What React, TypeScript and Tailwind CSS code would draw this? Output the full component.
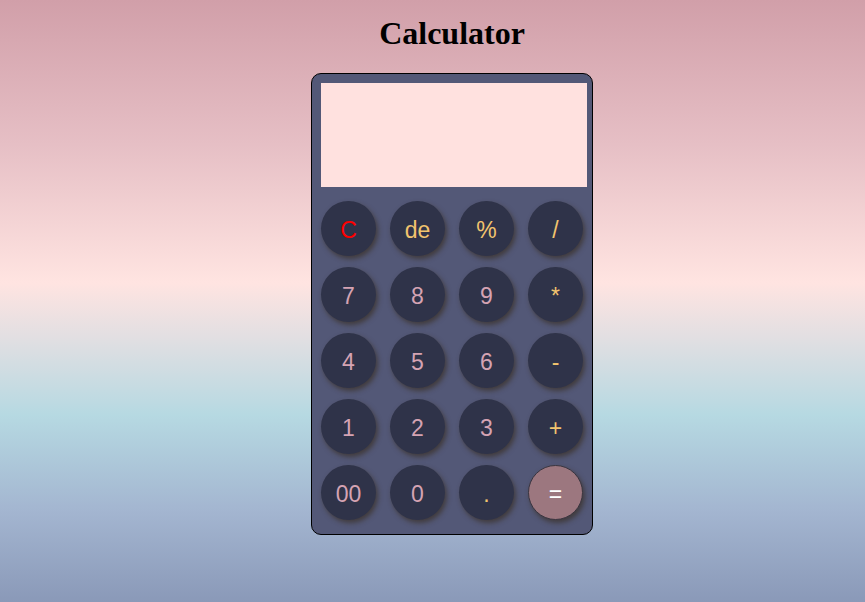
import React from "react";

const rows: { label: string; kind: "clear" | "op" | "num" | "eq" }[][] = [
  [
    { label: "C", kind: "clear" },
    { label: "de", kind: "op" },
    { label: "%", kind: "op" },
    { label: "/", kind: "op" },
  ],
  [
    { label: "7", kind: "num" },
    { label: "8", kind: "num" },
    { label: "9", kind: "num" },
    { label: "*", kind: "op" },
  ],
  [
    { label: "4", kind: "num" },
    { label: "5", kind: "num" },
    { label: "6", kind: "num" },
    { label: "-", kind: "op" },
  ],
  [
    { label: "1", kind: "num" },
    { label: "2", kind: "num" },
    { label: "3", kind: "num" },
    { label: "+", kind: "op" },
  ],
  [
    { label: "00", kind: "num" },
    { label: "0", kind: "num" },
    { label: ".", kind: "op" },
    { label: "=", kind: "eq" },
  ],
];

function Key({ label, kind }: { label: string; kind: string }) {
  const color =
    kind === "clear"
      ? "text-[#ff0000]"
      : kind === "op"
      ? "text-[#f2c46e]"
      : kind === "eq"
      ? "text-white"
      : "text-[#d5a3b3]";
  const bg = kind === "eq" ? "bg-[#9c777f] border border-[#3a3540]" : "bg-[#2f3349]";
  return (
    <button
      className={`w-[55px] h-[55px] rounded-full flex items-center justify-center pt-[3px] text-[23px] leading-none shadow-[2px_3px_5px_rgba(55,45,30,0.65)] ${bg} ${color}`}
      style={{ fontFamily: '"Liberation Sans", Arial, sans-serif' }}
    >
      {label}
    </button>
  );
}

export default function App() {
  return (
    <div className="min-h-[602px] w-full bg-[linear-gradient(180deg,#d19fa9_0%,#e6bfc5_24%,#ffe4e1_47%,#e2dfe2_56%,#b6d9e2_69%,#a3b5d0_85%,#8a99b8_100%)] flex flex-col items-center pl-[39px]">
      <h1
        className="mt-[16px] text-[32px] font-bold text-black leading-[35px]"
        style={{ fontFamily: '"Liberation Serif", "Times New Roman", serif' }}
      >
        Calculator
      </h1>
      <div className="mt-[22px] w-[282px] h-[462px] border border-black rounded-[10px] bg-[#535877] pt-[9px] pl-[9px] pr-[5px] pb-[14px] flex flex-col">
        <div className="w-[266px] h-[104px] bg-[#ffe1df]" />
        <div className="mt-[14px] grid grid-cols-[repeat(4,55px)] gap-x-[14px] gap-y-[11px]">
          {rows.flat().map((k, i) => (
            <Key key={i} label={k.label} kind={k.kind} />
          ))}
        </div>
      </div>
    </div>
  );
}
